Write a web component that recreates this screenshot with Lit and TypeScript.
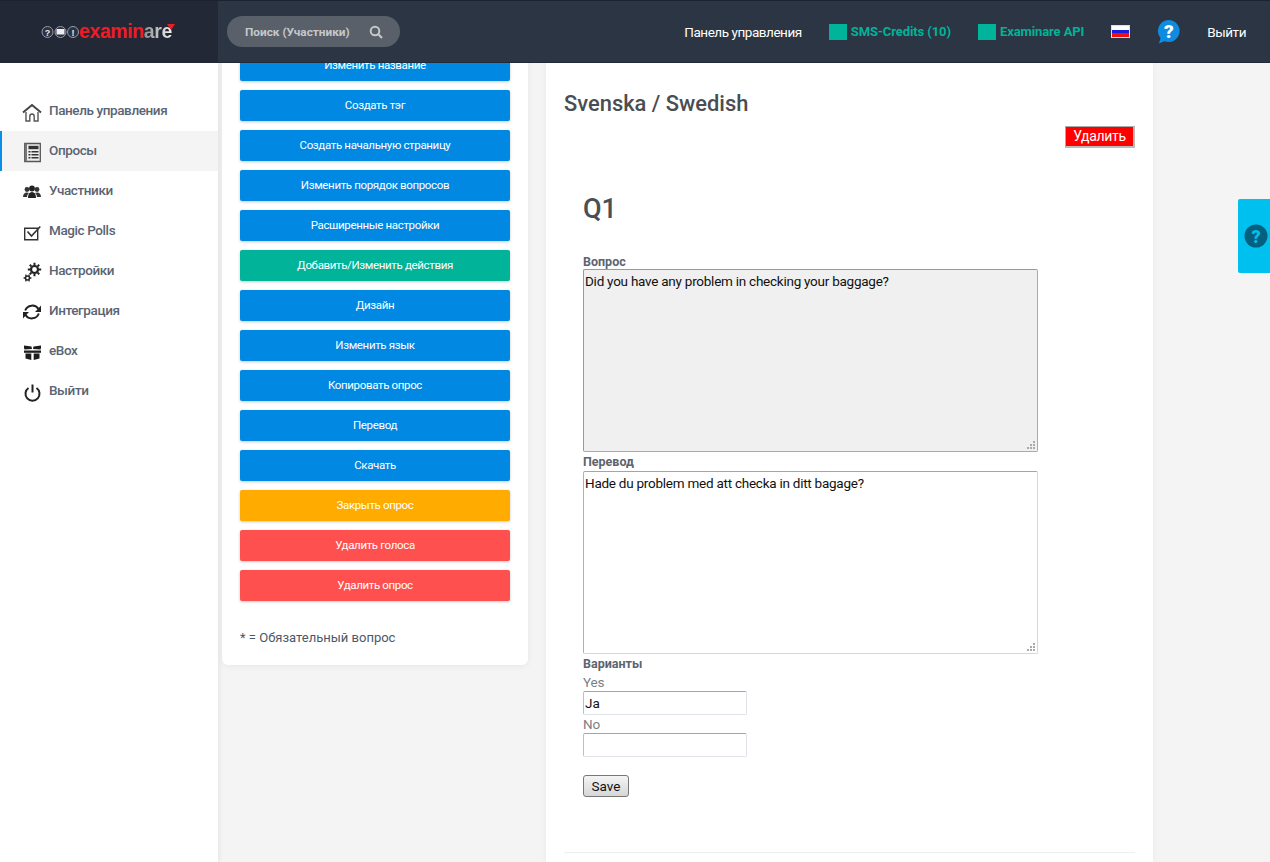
import { LitElement, html, css, svg } from "lit";
import { customElement } from "lit/decorators.js";

const gearTeeth = (cx: number, cy: number, r0: number, r1: number, n: number) => {
  let d = "";
  for (let i = 0; i < n; i++) {
    const a = (i / n) * Math.PI * 2;
    d += `M${(cx + Math.cos(a) * r0).toFixed(2)} ${(cy + Math.sin(a) * r0).toFixed(2)}L${(cx + Math.cos(a) * r1).toFixed(2)} ${(cy + Math.sin(a) * r1).toFixed(2)}`;
  }
  return d;
};

const ICONS: Record<string, unknown> = {
  home: svg`<path d="M2 10.500 11 3l9 7.500" fill="none" stroke="#444" stroke-width="2"/><path d="M5 10v9h3.800v-4.500q0-2.500 2.200-2.500t2.200 2.500V19H17v-9" fill="none" stroke="#555" stroke-width="1.400"/>`,
  form: svg`<path d="M3.700 1.500h15.600v18H3.700z" fill="#eee" stroke="#555" stroke-width="1.300"/><path d="M3.700 1.500h2.300v18H3.700z" fill="#777"/><path d="M7.500 3.800h10v3.400h-10z" fill="#333"/><path d="M7.500 9h2v1.600h-2zm0 3h2v1.600h-2zm0 3h2v1.600h-2z" fill="#333"/><path d="M10.500 9h7v1.400h-7zm0 3h7v1.400h-7zm0 3h7v1.400h-7z" fill="#333"/>`,
  users: svg`<circle cx="6" cy="7.500" r="2.400" fill="#333"/><circle cx="16" cy="7.500" r="2.400" fill="#333"/><circle cx="11" cy="6.500" r="2.900" fill="#222"/><path d="M2 15q.2-4.500 4-4.500 1.300 0 1.900.5-1.900 1.500-1.900 4z" fill="#333"/><path d="M20 15q-.2-4.500-4-4.500-1.300 0-1.900.5 1.900 1.500 1.900 4z" fill="#333"/><path d="M7 16q0-6 4-6t4 6z" fill="#222"/>`,
  check: svg`<path d="M3.700 6.200h13v11.600h-13z" fill="none" stroke="#333" stroke-width="1.400"/><path d="M6.500 9.500l4 4.500 8.800-9.500" fill="none" stroke="#333" stroke-width="1.600"/>`,
  gears: svg`<circle cx="13.500" cy="7.500" r="3.500" fill="none" stroke="#222" stroke-width="2.200"/><path d="${gearTeeth(13.5, 7.5, 4.5, 6.7, 8)}" stroke="#222" stroke-width="2"/><circle cx="6.500" cy="16" r="2" fill="none" stroke="#222" stroke-width="1.500"/><path d="${gearTeeth(6.5, 16, 2.5, 3.9, 6)}" stroke="#222" stroke-width="1.300"/>`,
  sync: svg`<path d="M4.200 8.500A7.500 7.500 0 0 1 17.500 7" fill="none" stroke="#222" stroke-width="2"/><path d="M20 3.500v6.500h-6z" fill="#222"/><path d="M17.800 11.500A7.500 7.500 0 0 1 4.500 13" fill="none" stroke="#222" stroke-width="2"/><path d="M2 16.500V10h6z" fill="#222"/>`,
  box: svg`<path d="M3 3.500l7.500 1 .5 2.500-7.500.500L3 6zM20 3.500l-7.500 1-.5 2.500 7.500.500L20 6z" fill="#1c1c1c"/><path d="M3 8.500h17v2.300H3z" fill="#1c1c1c"/><path d="M4.500 11.500h5.800V18l-5.800-1.500zM18.500 11.500h-5.800V18l5.800-1.500z" fill="#1c1c1c"/>`,
  power: svg`<path d="M7.500 6a7 7 0 1 0 8 0" fill="none" stroke="#222" stroke-width="2"/><path d="M11.500 2.500v8" stroke="#222" stroke-width="2"/>`,
};

const NAV = [
  ["home", "Панель управления"],
  ["form", "Опросы"],
  ["users", "Участники"],
  ["check", "Magic Polls"],
  ["gears", "Настройки"],
  ["sync", "Интеграция"],
  ["box", "eBox"],
  ["power", "Выйти"],
];

const BUTTONS: [string, string][] = [
  ["Изменить название", "blue"],
  ["Создать тэг", "blue"],
  ["Создать начальную страницу", "blue"],
  ["Изменить порядок вопросов", "blue"],
  ["Расширенные настройки", "blue"],
  ["Добавить/Изменить действия", "teal"],
  ["Дизайн", "blue"],
  ["Изменить язык", "blue"],
  ["Копировать опрос", "blue"],
  ["Перевод", "blue"],
  ["Скачать", "blue"],
  ["Закрыть опрос", "amber"],
  ["Удалить голоса", "red"],
  ["Удалить опрос", "red"],
];

const grip = html`<svg class="grip" width="8" height="8" viewBox="0 0 8 8"><path d="M6 0h2v2H6zM3 3h2v2H3zM6 3h2v2H6zM0 6h2v2H0zM3 6h2v2H3zM6 6h2v2H6z" fill="#aaa"/></svg>`;

@customElement("app-root")
export class AppRoot extends LitElement {
  static styles = css`
    :host {
      display: block;
      width: 1270px;
      height: 862px;
      overflow: hidden;
      position: relative;
      font-family: Roboto, "Liberation Sans", sans-serif;
      background: #f4f4f4;
      color: #555;
    }
    * { box-sizing: border-box; }
    header {
      height: 63px;
      display: flex;
      background: #2b3543;
      border-top: 1px solid #1b2230;
      border-bottom: 1px solid #222a36;
      position: relative;
      z-index: 2;
    }
    .brand {
      width: 218px;
      background: #222835;
      display: flex;
      align-items: center;
      padding: 1px 0 0 41px;
      gap: 0;
    }
    .logo-icons { display: block; flex: none; }
    .logo {
      font: 700 19.500px/1 "Liberation Sans", sans-serif;
      letter-spacing: -0.400px;
      color: #ee1c25;
      position: relative;
      white-space: nowrap;
    }
    .logo b {
      font-weight: 700;
      background: linear-gradient(90deg, #8f8f8f, #f2f2f2);
      -webkit-background-clip: text;
      background-clip: text;
      color: transparent;
    }
    .logo-tri {
      position: absolute;
      right: -3px;
      top: 2px;
      width: 0;
      height: 0;
      border-left: 4px solid transparent;
      border-right: 4px solid transparent;
      border-top: 6px solid #ee1c25;
    }
    .search {
      margin: 15px 0 0 9px;
      width: 173px;
      height: 31px;
      border-radius: 16px;
      background: #5a6069;
      display: flex;
      align-items: center;
      justify-content: space-between;
      padding: 0 17px 0 18px;
      font-size: 11.800px;
      font-weight: 700;
      color: #c6c8cb;
    }
    .top-nav {
      margin-left: auto;
      display: flex;
      align-items: center;
      padding-right: 24px;
      font-size: 13.500px;
      font-weight: 400;
      letter-spacing: -0.450px;
      color: #fff;
    }
    .top-nav > * { margin-left: 27px; }
    .link { color: #00b398; font-weight: 700; font-size: 13px; letter-spacing: -0.100px; display: flex; align-items: center; gap: 4px; }
    .sq { width: 18px; height: 16px; background: #00b39b; display: block; }
    .flag { width: 19px; height: 13px; display: flex; flex-direction: column; border: 1px solid #ddd; }
    .flag i { flex: 1; display: block; }
    .page { display: flex; height: 799px; overflow: hidden; }
    .side {
      width: 218px;
      flex: none;
      background: #fff;
      padding-top: 28px;
      box-shadow: 1px 0 5px rgba(0,0,0,.07);
    }
    .item {
      height: 40px;
      display: flex;
      align-items: center;
      padding: 0 0 2px 21px;
      gap: 7px;
      font-size: 13.500px;
      letter-spacing: -0.400px;
      font-weight: 500;
      color: #5a6472;
    }
    .item.on { background: #f4f4f4; box-shadow: inset 2px 0 0 #0a8fe8; }
    .item svg { width: 21px; height: 21px; flex: none; position: relative; top: 2px; }
    .mid {
      width: 306px;
      flex: none;
      margin: -13px 0 0 4px;
      height: 615px;
      background: #fff;
      border-radius: 6px;
      padding: 0 18px;
      box-shadow: 0 1px 6px rgba(0,0,0,.06);
      display: flex;
      flex-direction: column;
      gap: 9px;
    }
    .btn {
      height: 31px;
      flex: none;
      border-radius: 2px;
      display: flex;
      align-items: center;
      justify-content: center;
      font-size: 11.500px;
      letter-spacing: -0.350px;
      font-weight: 400;
      color: #fff;
      padding-bottom: 1px;
      box-shadow: 0 1px 3px rgba(0,0,0,.22);
    }
    .blue { background: #0088e2; }
    .teal { background: #00b399; }
    .amber { background: #ffab00; }
    .red { background: #ff5050; }
    .note { margin-top: 20px; font-size: 13px; color: #4c5867; font-weight: 400; }
    .main {
      width: 607px;
      flex: none;
      margin-left: 18px;
      background: #fff;
      padding: 28px 18px 0;
      box-shadow: 0 0 6px rgba(0,0,0,.05);
    }
    h2 { margin: 0; font-size: 21.900px; line-height: 26px; font-weight: 500; color: #4a4d52; }
    .del-row { display: flex; justify-content: flex-end; margin-top: 9px; }
    .del {
      width: 70px;
      height: 22px;
      background: #f00;
      color: #fff;
      font-size: 14px;
      letter-spacing: -0.300px;
      line-height: 18px;
      padding-bottom: 2px;
      display: flex;
      align-items: center;
      justify-content: center;
      border-style: solid;
      border-width: 1px 2px 2px 1px;
      border-color: #aaa #bbb #bbb #aaa;
    }
    .form { padding-left: 19px; }
    h1 { margin: 0; padding-top: 44px; font-size: 27px; line-height: 34px; font-weight: 500; color: #4a4f57; }
    label { display: block; font-size: 12.500px; line-height: 14px; font-weight: 700; color: #5d6470; }
    .q { margin-top: 29px; }
    .area { position: relative; width: 455px; height: 183px; }
    .box {
      width: 100%;
      height: 100%;
      padding: 1px;
      display: block;
      border: 1px solid;
      border-color: #a5a5a5 #d5d8de #d5d8de #b0b0b0;
      border-radius: 2px;
      font: 13.500px/20px Roboto, sans-serif;
      letter-spacing: -0.250px;
      color: #111;
      background: #fff;
      outline: none;
      resize: none;
    }
    .box.ro { background: #f0f0f0; border-color: #999 #aaa #aaa #999; }
    .grip { position: absolute; right: 3px; bottom: 3px; display: block; }
    .t { margin-top: 3px; margin-bottom: 2px; }
    .var { margin-bottom: 3px; }
    .opt { font-size: 13.500px; letter-spacing: -0.200px; line-height: 16px; color: #7a7f87; margin-bottom: 1px; }
    .inp {
      display: block;
      width: 164px;
      height: 24px;
      padding: 0 1px;
      border: 1px solid;
      border-color: #a5a5a5 #e0e3ea #e0e3ea #c0c0c0;
      border-radius: 2px;
      font: 13.500px Roboto, sans-serif;
      color: #111;
      background: #fff;
      outline: none;
      margin-bottom: 1px;
    }
    .save {
      display: block;
      margin-top: 18px;
      width: 46px;
      height: 22px;
      padding: 0;
      font: 13.500px Roboto, sans-serif;
      color: #111;
      border: 1px solid #777;
      border-radius: 3px;
      background: linear-gradient(#f4f4f4, #d6d6d6);
    }
    hr { border: 0; border-top: 1px solid #eee; margin: 55px 0 0; }
    .help {
      position: absolute;
      left: 1238px;
      top: 199px;
      width: 32px;
      height: 74px;
      background: #00c0ef;
      border-radius: 2px 0 0 2px;
      display: flex;
      align-items: center;
      padding-left: 6px;
    }
  `;

  render() {
    return html`
      <header>
        <div class="brand">
          <svg class="logo-icons" width="38" height="14" viewBox="0 0 38 14">
            <circle cx="6.500" cy="7" r="5.500" fill="#2b3240" stroke="#99a" stroke-width="1"/>
            <text x="6.500" y="10.500" text-anchor="middle" font-size="9" font-weight="700" fill="#eee" font-family="Liberation Sans">?</text>
            <circle cx="19.500" cy="7" r="5.500" fill="#2b3240" stroke="#99a" stroke-width="1"/>
            <rect x="15.500" y="4" width="8" height="5.500" fill="#eee"/>
            <circle cx="32" cy="7" r="5.500" fill="#2b3240" stroke="#99a" stroke-width="1"/>
            <text x="32" y="10.500" text-anchor="middle" font-size="9" font-weight="700" fill="#eee" font-family="Liberation Sans">!</text>
          </svg>
          <span class="logo">examin<b>are</b><i class="logo-tri"></i></span>
        </div>
        <div class="search">
          <span>Поиск (Участники)</span>
          <svg width="14" height="14" viewBox="0 0 14 14"><circle cx="6" cy="6" r="4.300" fill="none" stroke="#c6c8cb" stroke-width="2"/><path d="M9 9l4 4" stroke="#c6c8cb" stroke-width="2.200"/></svg>
        </div>
        <nav class="top-nav">
          <span>Панель управления</span>
          <span class="link"><i class="sq"></i>SMS-Credits (10)</span>
          <span class="link"><i class="sq"></i>Examinare API</span>
          <span class="flag"><i style="background:#fff"></i><i style="background:#1a1ae0"></i><i style="background:#f01010"></i></span>
          <svg width="23" height="25" viewBox="0 0 23 25">
            <path d="M11.500 1a11 11 0 1 1-4 21.200L2 24.500l1.500-5.500A11 11 0 0 1 11.500 1z" fill="#0f8be0"/>
            <text x="11.500" y="18.500" text-anchor="middle" font-size="19" font-weight="900" fill="#fff" font-family="Roboto">?</text>
          </svg>
          <span>Выйти</span>
        </nav>
      </header>
      <div class="page">
        <aside class="side">
          ${NAV.map(
            ([i, t]) => html`<div class="item ${t === "Опросы" ? "on" : ""}"><svg viewBox="0 0 21 21">${ICONS[i]}</svg><span>${t}</span></div>`
          )}
        </aside>
        <section class="mid">
          ${BUTTONS.map(([t, c]) => html`<div class="btn ${c}">${t}</div>`)}
          <div class="note">* = Обязательный вопрос</div>
        </section>
        <main class="main">
          <h2>Svenska / Swedish</h2>
          <div class="del-row"><div class="del">Удалить</div></div>
          <div class="form">
            <h1>Q1</h1>
            <label class="q">Вопрос</label>
            <div class="area"><textarea class="box ro" readonly .value=${"Did you have any problem in checking your baggage?"}></textarea>${grip}</div>
            <label class="t">Перевод</label>
            <div class="area"><textarea class="box" .value=${"Hade du problem med att checka in ditt bagage?"}></textarea>${grip}</div>
            <label class="t var">Варианты</label>
            <div class="opt">Yes</div>
            <input class="inp" .value=${"Ja"} />
            <div class="opt">No</div>
            <input class="inp" />
            <button class="save">Save</button>
          </div>
          <hr />
        </main>
      </div>
      <div class="help">
        <svg width="24" height="24" viewBox="0 0 24 24"><circle cx="12" cy="12" r="11.500" fill="#04607e"/><text x="12" y="18.500" text-anchor="middle" font-size="18" font-weight="900" fill="#00c0ef" font-family="Roboto">?</text></svg>
      </div>
    `;
  }
}
